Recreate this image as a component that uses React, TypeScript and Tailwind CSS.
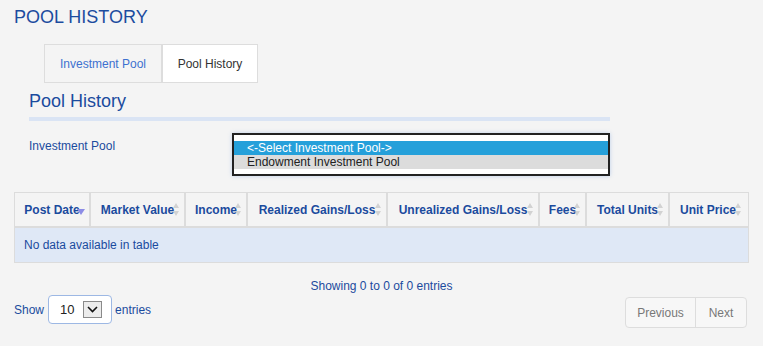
import React from 'react';

const columns = [
  { label: 'Post Date', w: 'w-[76px] border-r-2', sort: 'desc' },
  { label: 'Market Value', w: 'w-[95px] border-r-2', sort: 'both' },
  { label: 'Income', w: 'w-[62px] border-r-2', sort: 'both' },
  { label: 'Realized Gains/Loss', w: 'w-[140px] border-r-2', sort: 'both' },
  { label: 'Unrealized Gains/Loss', w: 'w-[152px] border-r-2', sort: 'both' },
  { label: 'Fees', w: 'w-[47px] border-r-2', sort: 'both' },
  { label: 'Total Units', w: 'w-[83px] border-r-2', sort: 'both' },
  { label: 'Unit Price', w: 'w-[76px]', sort: 'both' },
];

function SortIcon({ kind }: { kind: string }) {
  if (kind === 'desc') {
    return (
      <svg className="absolute right-[4px] top-[16px]" width="8" height="6" viewBox="0 0 8 6">
        <path d="M0 0 L8 0 L4 6 Z" fill="#8c8ce6" />
      </svg>
    );
  }
  return (
    <svg className="absolute right-[5px] top-[10px] opacity-70 blur-[0.4px]" width="6" height="13" viewBox="0 0 6 13">
      <path d="M0 5 L3 0 L6 5 Z" fill="#c4c4c4" />
      <path d="M0 8 L6 8 L3 13 Z" fill="#c4c4c4" />
    </svg>
  );
}

export default function App() {
  return (
    <div className="w-[763px] h-[346px] overflow-hidden bg-[#f4f4f4] font-['Liberation_Sans',Arial,sans-serif] text-[12px] text-[#1b4b9e]">
      <h1 className="pl-[14px] pt-[7px] text-[18px] leading-[20px] text-[#1c4c9f]">POOL HISTORY</h1>

      {/* tabs */}
      <div className="mt-[17px] flex pl-[44px]">
        <div className="flex h-[39px] w-[118px] items-center justify-center border border-[#dddddd] bg-[#f4f4f4] text-[#3d71d0]">
          Investment Pool
        </div>
        <div className="flex h-[39px] w-[96px] items-center justify-center border border-[#dddddd] bg-white text-[#333]">
          Pool History
        </div>
      </div>

      <h2 className="mt-[8px] pl-[29px] text-[18px] leading-[20px] text-[#1b4b9e]">Pool History</h2>
      <div className="ml-[29px] mt-[6px] h-[4px] w-[581px] bg-[#dae4f4]" />

      {/* pool select */}
      <div className="mt-[12px] flex">
        <label className="mt-[6px] w-[232px] pl-[29px] leading-[14px]">Investment Pool</label>
        <div className="h-[43px] w-[378px] border-2 border-[#222] bg-white pt-[6px] shadow-[0_0_4px_rgba(90,140,220,0.35)]">
          <div className="h-[14px] bg-[#25a0da] pl-[13px] leading-[14px] text-white">&lt;-Select Investment Pool-&gt;</div>
          <div className="h-[14px] bg-[#dcdcdc] pl-[13px] leading-[14px] text-[#222]">Endowment Investment Pool</div>
        </div>
      </div>

      {/* table */}
      <div className="mx-[14px] mt-[16px] border border-[#dcdcdc]">
        <div className="flex h-[35px] border-b-2 border-[#dcdcdc]">
          {columns.map((c) => (
            <div
              key={c.label}
              className={`relative flex items-center justify-center border-[#dcdcdc] font-bold ${c.w}`}
            >
              {c.label}
              <SortIcon kind={c.sort} />
            </div>
          ))}
        </div>
        <div className="flex h-[34px] items-center bg-[#dfe8f6] pl-[9px]">No data available in table</div>
      </div>

      <div className="mx-[14px] mt-[16px] text-center leading-[14px]">Showing 0 to 0 of 0 entries</div>

      <div className="mt-[2px] flex items-start justify-between pl-[14px] pr-[16px]">
        <div className="flex items-center">
          <span>Show</span>
          <div className="ml-[4px] flex h-[29px] w-[64px] items-center rounded-[4px] border border-[#9db8e4] bg-white pl-[11px] text-[13px] text-[#222]">
            <span>10</span>
            <div className="ml-[8px] flex h-[17px] w-[19px] items-center justify-center border border-[#8a8a8a] bg-[#ececec]">
              <svg width="11" height="7" viewBox="0 0 11 7">
                <path d="M1 1 L5.5 5.5 L10 1" fill="none" stroke="#111" strokeWidth="1.6" />
              </svg>
            </div>
          </div>
          <span className="ml-[3px]">entries</span>
        </div>
        <div className="mt-[2px] flex h-[31px] rounded-[4px] border border-[#dddddd] bg-[#f7f7f7] text-[#777]">
          <div className="flex w-[70px] items-center justify-center border-r border-[#dddddd]">Previous</div>
          <div className="flex w-[50px] items-center justify-center">Next</div>
        </div>
      </div>
    </div>
  );
}
